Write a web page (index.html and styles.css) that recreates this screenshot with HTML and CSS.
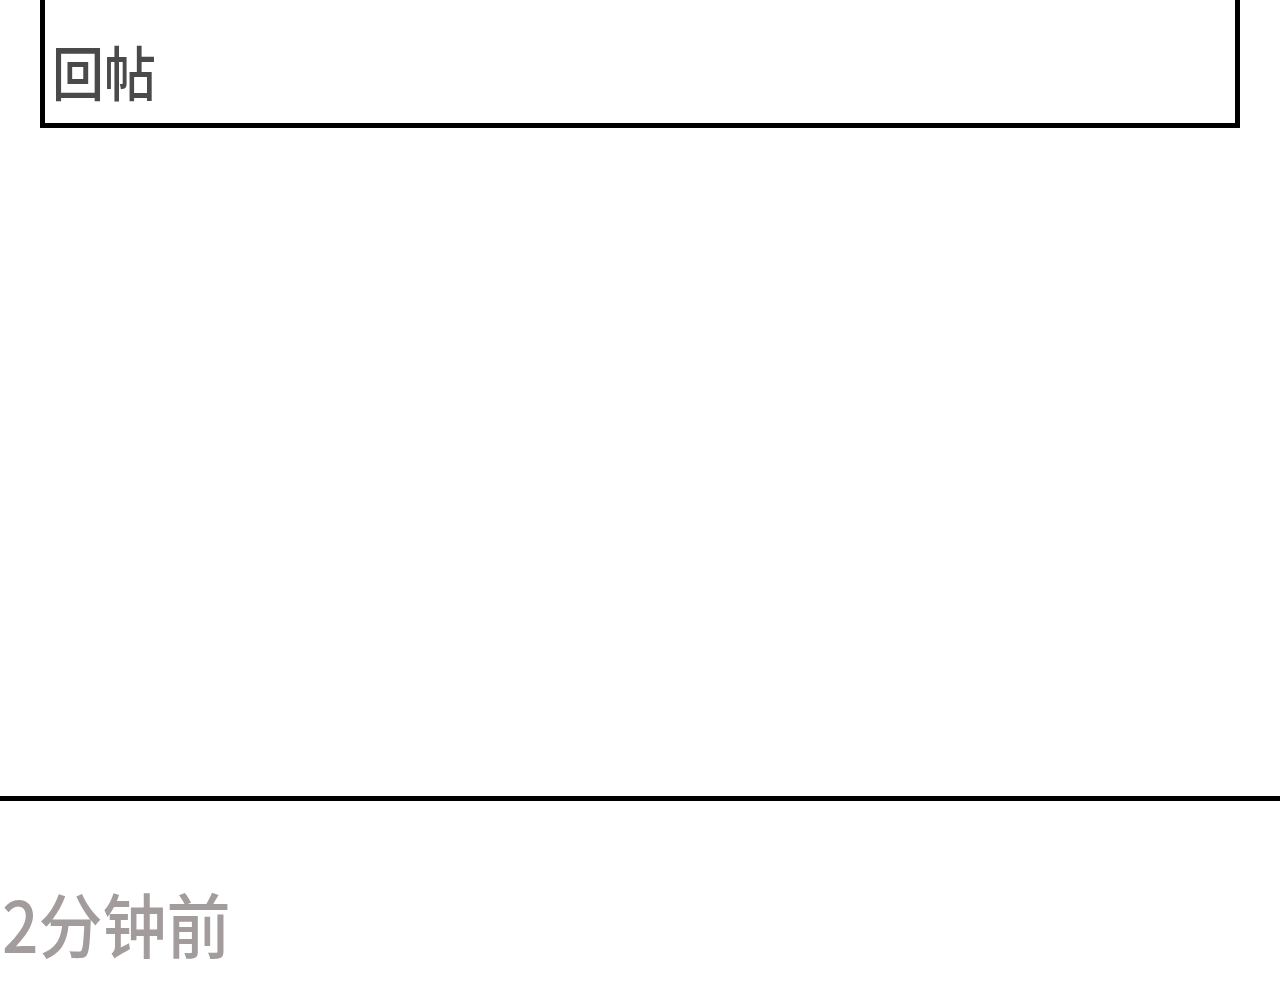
FILE: index.html
```html
<!DOCTYPE html>
<html lang="zh">
<head>
<meta charset="utf-8">
<link rel="stylesheet" href="styles.css">
</head>
<body>
<div class="reply-box">
  <span class="reply-label">回帖</span>
</div>
<div class="spacer"></div>
<div class="divider"></div>
<div class="time">2分钟前</div>
</body>
</html>
```
FILE: styles.css
```css
html, body {
  margin: 0;
  padding: 0;
  background: #ffffff;
}
body {
  font-family: "Noto Sans CJK SC", "Noto Sans", sans-serif;
  width: 1280px;
  height: 1000px;
  overflow: hidden;
}
.reply-box {
  margin-left: 40px;
  width: 1190px;
  height: 123px;
  border: 5px solid #000;
  border-top: none;
  box-sizing: content-box;
  padding: 0;
}
.reply-label {
  display: block;
  padding-top: 36px;
  padding-left: 7px;
  font-size: 52px;
  font-weight: 500;
  line-height: 1;
  color: #4a4a4a;
  transform: scaleY(1.14);
  transform-origin: top left;
}
.spacer {
  height: 668px;
}
.divider {
  height: 5px;
  background: #000;
}
.time {
  margin-top: 86px;
  padding-left: 2px;
  font-size: 64px;
  font-weight: 500;
  line-height: 1;
  color: #a39c9c;
  transform: scaleY(1.1);
  transform-origin: top left;
}
```
